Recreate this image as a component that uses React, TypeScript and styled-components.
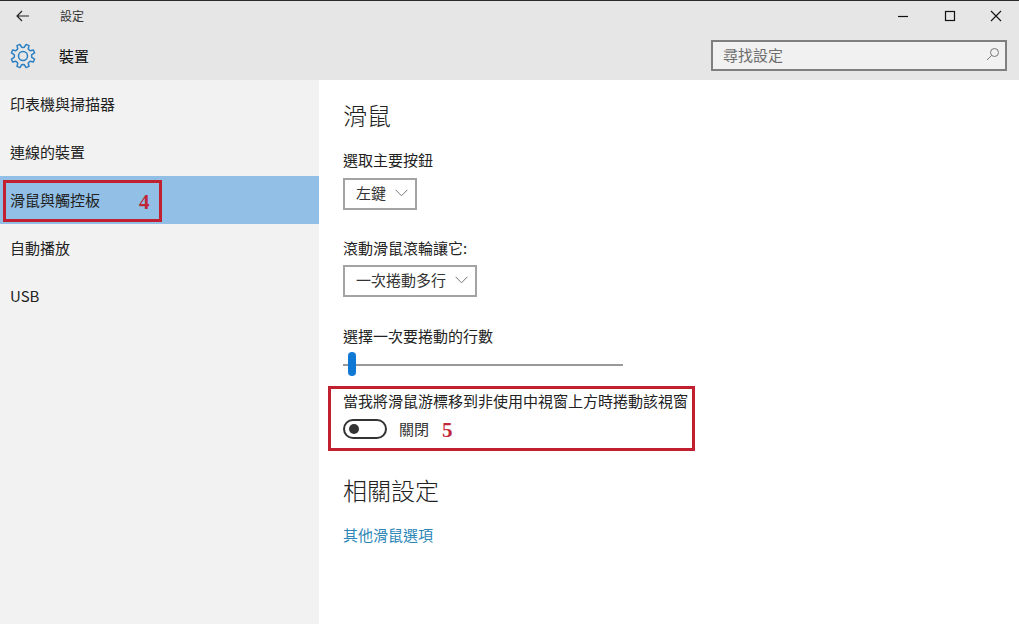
import React from "react";
import styled, { createGlobalStyle } from "styled-components";

const Global = createGlobalStyle`
  html, body { margin: 0; padding: 0; background: #fff; }
  body { font-family: "Noto Sans CJK TC", "Noto Sans", sans-serif; color: #1a1a1a; }
`;

const Window = styled.div`
  position: relative;
  width: 1019px;
  height: 624px;
  overflow: hidden;
  border-top: 1px solid #2b2b2b;
  box-sizing: border-box;
  display: flex;
  flex-direction: column;
`;

const Header = styled.header`
  height: 79px;
  background: #e6e6e6;
  display: flex;
  flex-direction: column;
  flex: none;
`;

const TitleBar = styled.div`
  height: 29px;
  display: flex;
  align-items: center;
  font-size: 12px;
  line-height: 16px;
  flex: none;
`;

const BackSlot = styled.div`
  width: 60px;
  padding-left: 16px;
  box-sizing: border-box;
  display: flex;
  align-items: center;
`;

const AppName = styled.span`
  flex: 1;
  color: #333;
`;

const WindowButton = styled.div`
  width: 46px;
  height: 29px;
  display: flex;
  align-items: center;
  justify-content: center;
`;

const SubBar = styled.div`
  flex: 1;
  display: flex;
  align-items: center;
  padding: 0 12px 0 10px;
  font-size: 15px;
`;

const GearSlot = styled.div`
  width: 49px;
  padding-top: 2px;
  display: flex;
  align-items: center;
`;

const SectionName = styled.span`
  flex: 1;
  color: #111;
`;

const SearchBox = styled.div`
  width: 296px;
  height: 31px;
  box-sizing: border-box;
  border: 2px solid #7f7f7f;
  background: #f1f1f1;
  display: flex;
  align-items: center;
  justify-content: space-between;
  padding: 0 5px 2px 10px;
  font-size: 15px;
  color: #6e6e6e;
`;

const Body = styled.div`
  flex: 1;
  display: flex;
  min-height: 0;
`;

const Sidebar = styled.nav`
  width: 319px;
  background: #f2f2f2;
  flex: none;
`;

const NavItem = styled.div<{ $active?: boolean }>`
  height: 48px;
  padding: 0 0 1px 10px;
  box-sizing: border-box;
  display: flex;
  align-items: center;
  font-size: 15px;
  color: #222;
  background: ${(p) => (p.$active ? "#91bfe6" : "transparent")};
`;

const Content = styled.main`
  flex: 1;
  background: #fff;
  padding: 18px 0 0 24px;
  display: flex;
  flex-direction: column;
  align-items: flex-start;
`;

const Heading = styled.h2<{ $gap?: number }>`
  margin: ${(p) => p.$gap ?? 0}px 0 0;
  font-size: 24px;
  font-weight: 300;
  line-height: 34px;
  color: #222;
`;

const Label = styled.div<{ $gap: number }>`
  margin-top: ${(p) => p.$gap}px;
  font-size: 15px;
  line-height: 22px;
  color: #222;
`;

const Select = styled.div<{ $gap: number }>`
  height: 32px;
  box-sizing: border-box;
  border: 2px solid #a3a3a3;
  display: inline-flex;
  align-items: center;
  gap: 9px;
  padding: 0 7px 3px 11px;
  font-size: 15px;
  color: #333;
  margin-top: ${(p) => p.$gap}px;
`;

const SliderTrack = styled.div`
  position: relative;
  width: 280px;
  height: 2px;
  background: #999;
  margin-top: 17px;
`;

const SliderThumb = styled.div`
  position: absolute;
  left: 5px;
  top: -12px;
  width: 8px;
  height: 24px;
  border-radius: 4px;
  background: #0f78d4;
`;

const ToggleRow = styled.div`
  display: flex;
  align-items: center;
  gap: 12px;
  margin-top: 6px;
  font-size: 15px;
  color: #333;
`;

const Toggle = styled.div`
  width: 44px;
  height: 20px;
  box-sizing: border-box;
  border: 2px solid #333;
  border-radius: 10px;
  display: flex;
  align-items: center;
  padding-left: 4px;
`;

const Knob = styled.div`
  width: 10px;
  height: 10px;
  border-radius: 50%;
  background: #333;
`;

const Link = styled.a`
  margin-top: 17px;
  font-size: 15px;
  line-height: 22px;
  color: #2c87b8;
`;

const Callout = styled.div<{ $l: number; $t: number; $w: number; $h: number }>`
  position: absolute;
  left: ${(p) => p.$l}px;
  top: ${(p) => p.$t}px;
  width: ${(p) => p.$w}px;
  height: ${(p) => p.$h}px;
  box-sizing: border-box;
  border: 3px solid #c0202f;
`;

const Mark = styled.span<{ $l: number; $t: number }>`
  position: absolute;
  left: ${(p) => p.$l}px;
  top: ${(p) => p.$t}px;
  font-family: "Liberation Serif", serif;
  font-weight: 700;
  font-size: 21px;
  line-height: 24px;
  color: #c0283a;
`;

const Chevron = () => (
  <svg width="13" height="8" viewBox="0 0 13 8" fill="none" stroke="#777" strokeWidth="1">
    <path d="M.6 .8 6.5 6.8 12.4 .8" />
  </svg>
);

const gearPath = (() => {
  const teeth = 8;
  const pts: string[] = [];
  for (let i = 0; i < teeth; i++) {
    const a = (i * 2 * Math.PI) / teeth - Math.PI / 2 + Math.PI / 8;
    const step = (2 * Math.PI) / teeth;
    const spots: [number, number][] = [
      [8.6, -0.5 * step],
      [8.9, -0.3 * step],
      [12, -0.17 * step],
      [12, 0.17 * step],
      [8.9, 0.3 * step],
    ];
    spots.forEach(([r, o]) => {
      pts.push(`${(13 + r * Math.cos(a + o)).toFixed(2)} ${(13 + r * Math.sin(a + o)).toFixed(2)}`);
    });
  }
  return `M${pts.join("L")}Z`;
})();

const Gear = () => (
  <svg width="26" height="26" viewBox="0 0 26 26" fill="none" stroke="#2b7fc2" strokeWidth="1.5" strokeLinejoin="round">
    <path d={gearPath} />
    <circle cx="13" cy="13" r="4.5" />
  </svg>
);

export default function App() {
  return (
    <>
      <Global />
      <Window>
        <Header>
          <TitleBar>
            <BackSlot>
              <svg width="13" height="12" viewBox="0 0 13 12" fill="none" stroke="#222" strokeWidth="1.2">
                <path d="M13 6H1M6 1 1 6l5 5" />
              </svg>
            </BackSlot>
            <AppName>設定</AppName>
            <WindowButton>
              <svg width="12" height="12" viewBox="0 0 12 12" stroke="#111" strokeWidth="1.2"><path d="M0 6.5h10" /></svg>
            </WindowButton>
            <WindowButton>
              <svg width="12" height="12" viewBox="0 0 12 12" fill="none" stroke="#111" strokeWidth="1.2"><rect x="1.5" y="1.5" width="9" height="9" /></svg>
            </WindowButton>
            <WindowButton>
              <svg width="12" height="12" viewBox="0 0 12 12" stroke="#111" strokeWidth="1.1"><path d="M1 1l10 10M11 1 1 11" /></svg>
            </WindowButton>
          </TitleBar>
          <SubBar>
            <GearSlot><Gear /></GearSlot>
            <SectionName>裝置</SectionName>
            <SearchBox>
              <span>尋找設定</span>
              <svg width="14" height="14" viewBox="0 0 14 14" fill="none" stroke="#777" strokeWidth="1">
                <circle cx="8.5" cy="5.5" r="4" /><path d="M5.5 8.5 1 13" />
              </svg>
            </SearchBox>
          </SubBar>
        </Header>
        <Body>
          <Sidebar>
            <NavItem>印表機與掃描器</NavItem>
            <NavItem>連線的裝置</NavItem>
            <NavItem $active>滑鼠與觸控板</NavItem>
            <NavItem>自動播放</NavItem>
            <NavItem>USB</NavItem>
          </Sidebar>
          <Content>
            <Heading>滑鼠</Heading>
            <Label $gap={17}>選取主要按鈕</Label>
            <Select $gap={7}>左鍵 <Chevron /></Select>
            <Label $gap={27}>滾動滑鼠滾輪讓它:</Label>
            <Select $gap={6}>一次捲動多行 <Chevron /></Select>
            <Label $gap={28}>選擇一次要捲動的行數</Label>
            <SliderTrack><SliderThumb /></SliderTrack>
            <Label $gap={24}>當我將滑鼠游標移到非使用中視窗上方時捲動該視窗</Label>
            <ToggleRow><Toggle><Knob /></Toggle>關閉</ToggleRow>
            <Heading $gap={34}>相關設定</Heading>
            <Link>其他滑鼠選項</Link>
          </Content>
        </Body>
        <Callout $l={3} $t={179} $w={159} $h={42} />
        <Mark $l={139} $t={189}>4</Mark>
        <Callout $l={328} $t={385} $w={367} $h={65} />
        <Mark $l={442} $t={417}>5</Mark>
      </Window>
    </>
  );
}
